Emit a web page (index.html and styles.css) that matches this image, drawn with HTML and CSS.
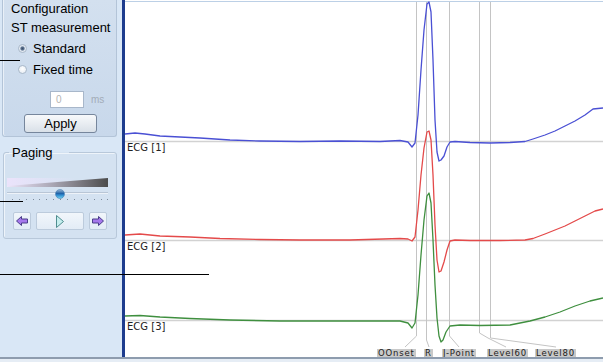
FILE: index.html
```html
<!DOCTYPE html>
<html>
<head>
<meta charset="utf-8">
<link rel="stylesheet" href="styles.css">
</head>
<body>
<div class="app">
  <aside class="sidebar">
    <section class="config">
      <div class="title">Configuration</div>
      <div class="subtitle">ST measurement</div>
      <label class="radio-row"><span class="radio checked"></span>Standard</label>
      <label class="radio-row"><span class="radio"></span>Fixed time</label>
      <div class="input-row"><span class="num-input">0</span><span class="unit">ms</span></div>
      <button class="apply">Apply</button>
    </section>
    <fieldset class="paging">
      <legend>Paging</legend>
      <svg class="slider" width="104" height="33" viewBox="0 0 104 33">
        <defs>
          <linearGradient id="wg" x1="0" y1="0" x2="1" y2="0">
            <stop offset="0" stop-color="#ece6fa"/>
            <stop offset="0.45" stop-color="#a9a6b4"/>
            <stop offset="1" stop-color="#4c4c4c"/>
          </linearGradient>
          <linearGradient id="glow" x1="0" y1="0" x2="1" y2="0">
            <stop offset="0" stop-color="#ebe3fb"/>
            <stop offset="1" stop-color="#ebe3fb" stop-opacity="0"/>
          </linearGradient>
          <linearGradient id="thumb" x1="0" y1="0" x2="0" y2="1">
            <stop offset="0" stop-color="#9dbad6"/>
            <stop offset="0.45" stop-color="#1f62a8"/>
            <stop offset="0.6" stop-color="#2b86cc"/>
            <stop offset="1" stop-color="#74d6f4"/>
          </linearGradient>
        </defs>
        <rect x="1" y="8" width="70" height="8" fill="url(#glow)"/>
        <polygon points="1,16 102,8 102,17 1,17" fill="url(#wg)"/>
        <line x1="1" y1="22.5" x2="102" y2="22.5" stroke="#b9c6d6" stroke-width="1"/>
        <line x1="1" y1="23.5" x2="102" y2="23.5" stroke="#eef3f9" stroke-width="1"/>
        <g fill="#7d8b9c">
          <rect x="6" y="29" width="1" height="1"/><rect x="13" y="29" width="1" height="1"/>
          <rect x="20" y="29" width="1" height="1"/><rect x="27" y="29" width="1" height="1"/>
          <rect x="33" y="29" width="1" height="1"/><rect x="40" y="29" width="1" height="1"/>
          <rect x="47" y="29" width="1" height="1"/><rect x="54" y="29" width="1" height="1"/>
          <rect x="61" y="29" width="1" height="1"/><rect x="68" y="29" width="1" height="1"/>
          <rect x="75" y="29" width="1" height="1"/><rect x="81" y="29" width="1" height="1"/>
          <rect x="88" y="29" width="1" height="1"/><rect x="95" y="29" width="1" height="1"/>
          <rect x="101" y="29" width="1" height="1"/>
        </g>
        <circle cx="54" cy="24" r="4.5" fill="url(#thumb)" stroke="#4a7fb0" stroke-width="0.6"/>
      </svg>
      <div class="nav">
        <button class="nav-btn small" aria-label="previous">
          <svg width="12" height="10" viewBox="0 0 12 10"><path d="M0.5,5 L5.5,0.5 L5.5,3 L11.5,3 L11.5,7 L5.5,7 L5.5,9.5 Z" fill="#a678ec" stroke="#4a3f8a" stroke-width="1" stroke-linejoin="round"/></svg>
        </button>
        <button class="nav-btn wide" aria-label="play">
          <svg width="8" height="13" viewBox="0 0 8 13"><path d="M0.5,0.5 L7.5,6.5 L0.5,12.5 Z" fill="#c6eeee" stroke="#4f8d8f" stroke-width="1" stroke-linejoin="round"/></svg>
        </button>
        <button class="nav-btn small" aria-label="next">
          <svg width="12" height="10" viewBox="0 0 12 10"><path d="M11.5,5 L6.5,0.5 L6.5,3 L0.5,3 L0.5,7 L6.5,7 L6.5,9.5 Z" fill="#a678ec" stroke="#4a3f8a" stroke-width="1" stroke-linejoin="round"/></svg>
        </button>
      </div>
    </fieldset>
  </aside>
  <div class="divider"></div>
  <main class="plot">
    <svg class="chart" width="478" height="357" viewBox="125 0 478 357">
      <line x1="125" y1="1.5" x2="603" y2="1.5" stroke="#bcd0e6" stroke-width="1"/>
      <g stroke="#d2d2d2" stroke-width="1.5">
        <line x1="125" y1="141.5" x2="603" y2="141.5"/>
        <line x1="125" y1="240.5" x2="603" y2="240.5"/>
        <line x1="125" y1="320.5" x2="603" y2="320.5"/>
      </g>
      <g stroke="#c4c4c4" stroke-width="1" fill="none">
        <path d="M416.5,2 L416.5,336 L405,347"/>
        <path d="M426.5,2 L426.5,340 L429,347"/>
        <path d="M449.5,2 L449.5,336 L459,347"/>
        <path d="M479.5,2 L479.5,333 L488,338 L506,347"/>
        <path d="M490.5,2 L490.5,338 L556,347"/>
      </g>
      <g fill="none" stroke-width="1.3" stroke-linejoin="round">
        <path stroke="#4a50d4" d="M125,134 L135,133 L145,134 L160,136 L180,137 L200,138 L230,140 L260,141 L300,141.5 L340,141 L380,141.5 L400,140.5 L408,142 L412,147 L415,143 L418,115 L421,70 L424,30 L427,4 L429,2 L431,12 L433,60 L435,120 L437,152 L439,161 L441,160 L444,156 L447,147 L450,142 L455,141.5 L470,142.5 L490,143 L510,142.5 L525,141.5 L533,139 L545,135 L555,131 L565,126 L575,121 L585,115 L593,109 L603,108"/>
        <path stroke="#e44a4a" d="M125,235 L140,234 L160,236 L190,237 L220,238.5 L260,239.5 L300,240 L350,240 L400,238.5 L408,239 L412,241 L415,237 L418,210 L421,175 L424,148 L427,132 L429,131 L431,140 L433,175 L435,225 L437,260 L439,272 L441,271 L444,262 L447,250 L450,241 L455,240 L470,240.5 L500,240.5 L525,240 L533,238.5 L545,234 L555,230 L565,226 L575,221 L585,216 L595,211 L603,209"/>
        <path stroke="#3f8f3f" d="M125,316 L140,315.5 L160,317 L190,318.5 L230,320 L280,321 L330,321 L380,321 L400,321 L408,323 L412,328 L415,323 L418,295 L421,255 L424,220 L427,196 L429,193 L431,203 L433,240 L435,285 L437,318 L439,336 L441,342 L443,340 L446,332 L450,326 L460,325 L480,325.5 L510,325 L530,321 L545,317 L560,312 L575,306 L590,301 L603,298"/>
      </g>
    </svg>
    <span class="lead-label l1">ECG [1]</span>
    <span class="lead-label l2">ECG [2]</span>
    <span class="lead-label l3">ECG [3]</span>
    <span class="mark m-onset">OOnset</span>
    <span class="mark m-r">R</span>
    <span class="mark m-j">J-Point</span>
    <span class="mark m-l60">Level60</span>
    <span class="mark m-l80">Level80</span>
  </main>
  <div class="leader leader1"></div>
  <div class="leader leader2"></div>
  <div class="leader leader3"></div>
</div>
</body>
</html>
```
FILE: styles.css
```css
html, body {
  margin: 0;
  padding: 0;
}
body {
  width: 603px;
  height: 362px;
  overflow: hidden;
  background: #e6edf5;
  font-family: "Liberation Sans", Arial, sans-serif;
}
.app {
  position: relative;
  display: flex;
  height: 357px;
  border-bottom: 2px solid #8e9cae;
}
.sidebar {
  width: 122px;
  flex: none;
  background: #d9e7f6;
  display: flex;
  flex-direction: column;
}
.config {
  margin-left: 2px;
  width: 115px;
  height: 137px;
  box-sizing: border-box;
  border: 1px solid #b3c4d8;
  border-top: none;
  border-radius: 0 0 3px 3px;
  background: linear-gradient(#d3e0ef, #c8d8eb);
  box-shadow: inset 1px 0 0 #e9f0f8;
  padding-left: 8px;
  font-size: 13px;
  color: #000;
}
.title {
  height: 17px;
  line-height: 17px;
}
.subtitle {
  height: 21px;
  line-height: 21px;
}
.radio-row {
  display: flex;
  align-items: center;
  gap: 6px;
  height: 21px;
  padding-left: 7px;
}
.radio {
  width: 9px;
  height: 9px;
  box-sizing: border-box;
  border-radius: 50%;
  border: 1px solid #a9b8c9;
  background: radial-gradient(circle at 50% 40%, #ffffff, #e2e9f1);
}
.radio.checked {
  background: radial-gradient(circle at 50% 50%, #3b4f6b 0, #5d7390 1.6px, #dfe7f0 2.6px, #f7f9fc 100%);
}
.input-row {
  display: flex;
  align-items: center;
  gap: 7px;
  margin-top: 11px;
  padding-left: 39px;
  height: 17px;
}
.num-input {
  width: 34px;
  height: 17px;
  box-sizing: border-box;
  border: 1px solid #a8b7ca;
  background: #fff;
  color: #b4b4b4;
  font-size: 10px;
  line-height: 15px;
  padding-left: 5px;
}
.unit {
  color: #a3acb8;
  font-size: 10px;
}
.apply {
  display: block;
  margin: 6px 0 0 13px;
  width: 73px;
  height: 19px;
  padding: 0;
  border: 1px solid #76869c;
  border-radius: 3px;
  background: linear-gradient(#f7f9fb, #e9edf2 50%, #d9e0e8);
  font-family: "Liberation Sans", Arial, sans-serif;
  font-size: 13px;
  line-height: 17px;
  color: #000;
}
.paging {
  margin: 8px 0 0 3px;
  width: 114px;
  box-sizing: border-box;
  padding: 0 0 8px 0;
  border: 1px solid #b8c8da;
  border-radius: 3px;
  box-shadow: inset 1px 1px 0 #eef4fa;
  background: #d4e2f1;
  min-inline-size: 0;
}
.paging legend {
  margin-left: 5px;
  padding: 0 17px 0 3px;
  font-size: 13px;
  line-height: 15px;
  color: #000;
}
.slider {
  display: block;
  margin: 10px 0 0 2px;
}
.nav {
  display: flex;
  gap: 5px;
  margin: 9px 0 0 9px;
}
.nav-btn {
  display: flex;
  align-items: center;
  justify-content: center;
  height: 18px;
  padding: 0;
  border: 1px solid #bccbdc;
  border-radius: 2px;
  background: linear-gradient(#f1f6fb, #e3ecf6);
}
.nav-btn.small {
  width: 18px;
}
.nav-btn.wide {
  width: 48px;
}
.divider {
  width: 3px;
  flex: none;
  background: #1d3c8e;
}
.plot {
  position: relative;
  flex: 1;
  background: #fff;
  overflow: hidden;
}
.chart {
  position: absolute;
  left: 0;
  top: 0;
  display: block;
}
.lead-label {
  position: absolute;
  left: 2px;
  font-family: "DejaVu Sans", Verdana, sans-serif;
  font-size: 10px;
  line-height: 10px;
  color: #222;
}
.l1 { top: 143px; }
.l2 { top: 242px; }
.l3 { top: 322px; }
.mark {
  position: absolute;
  top: 349px;
  height: 9px;
  padding: 0 1px;
  background: #c9c9c9;
  font-family: "DejaVu Sans", Verdana, sans-serif;
  font-size: 8.5px;
  line-height: 9px;
  letter-spacing: 0.8px;
  color: #222;
}
.m-onset { left: 252px; }
.m-r { left: 299px; }
.m-j { left: 317px; }
.m-l60 { left: 362px; }
.m-l80 { left: 410px; }
.leader {
  position: absolute;
  left: 0;
  height: 1px;
  background: #000;
  z-index: 2;
}
.leader1 { top: 60px; width: 20px; }
.leader2 { top: 201px; width: 23px; }
.leader3 { top: 274px; width: 209px; }
```
